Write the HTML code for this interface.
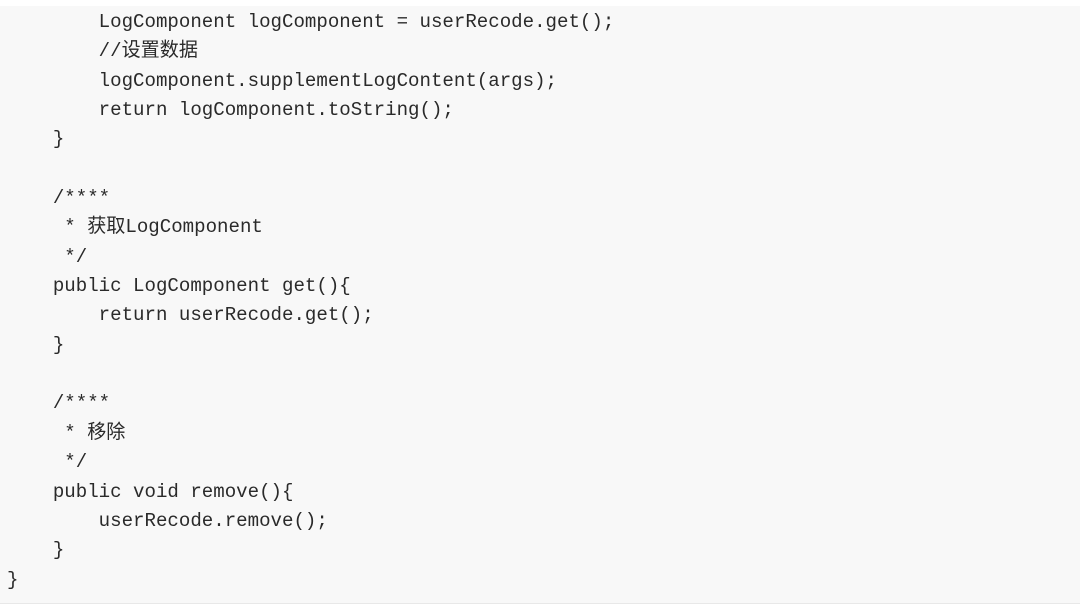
<!DOCTYPE html>
<html><head><meta charset="utf-8"><style>
html,body{margin:0;padding:0;background:#fff;}
.wrap{position:absolute;left:0;top:6px;width:1080px;height:597px;background:#f8f8f8;border-bottom:1px solid #e8e8e8;}
pre{margin:0;position:absolute;left:7px;top:2px;font-family:"Liberation Mono","Noto Sans CJK SC",monospace;font-size:19.1px;line-height:29.35px;color:#2a2a2a;}
</style></head><body>
<div class="wrap"><pre>        LogComponent logComponent = userRecode.get();
        //设置数据
        logComponent.supplementLogContent(args);
        return logComponent.toString();
    }

    /****
     * 获取LogComponent
     */
    public LogComponent get(){
        return userRecode.get();
    }

    /****
     * 移除
     */
    public void remove(){
        userRecode.remove();
    }
}</pre></div>
</body></html>
